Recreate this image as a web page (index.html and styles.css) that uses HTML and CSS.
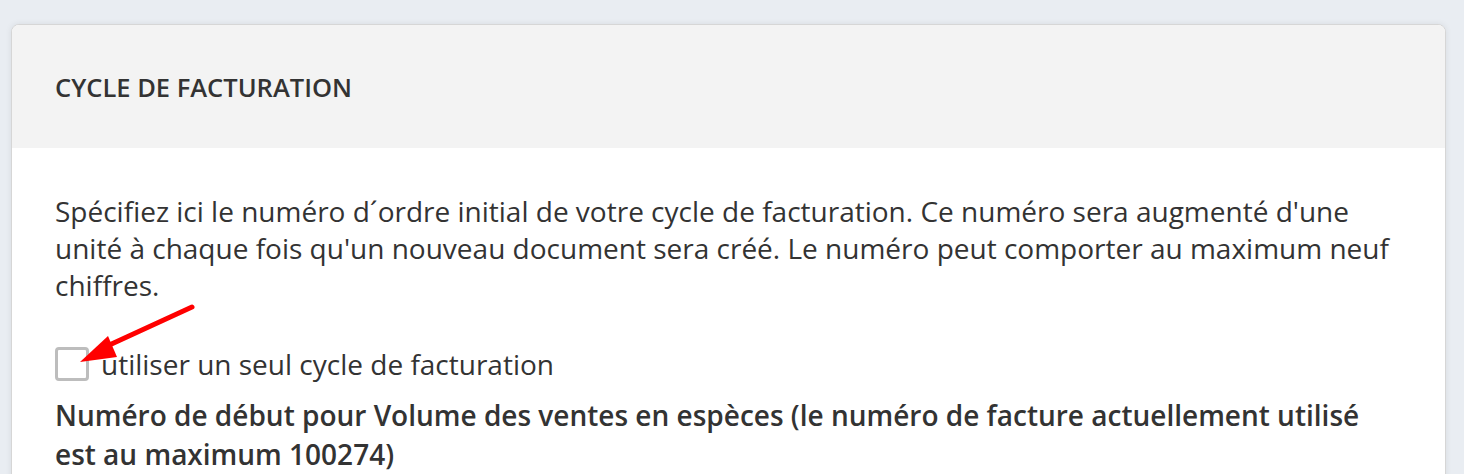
FILE: index.html
```html
<!DOCTYPE html>
<html lang="fr">
<head>
  <meta charset="UTF-8" />
  <title>Cycle de facturation</title>
  <link rel="stylesheet" href="styles.css">
</head>
<body>
  <div class="card">
    <div class="card-header">
      <h2>Cycle de facturation</h2>
    </div>
    <div class="card-body">
      <p class="intro">Spécifiez ici le numéro d´ordre initial de votre cycle de facturation. Ce numéro sera augmenté d'une unité à chaque fois qu'un nouveau document sera créé. Le numéro peut comporter au maximum neuf chiffres.</p>

      <label class="check">
        <input type="checkbox" id="singleCycle" />
        <span class="box"></span>
        utiliser un seul cycle de facturation
        <!-- fleche d'annotation -->
        <svg class="arrow" width="160" height="80" viewBox="0 0 160 80">
          <line x1="142" y1="7" x2="55" y2="47" stroke="#f00" stroke-width="5" stroke-linecap="round" />
          <polygon points="30,62 58,36 67,57" fill="#f00" />
        </svg>
      </label>

      <p class="field-label">Numéro de début pour Volume des ventes en espèces (le numéro de facture actuellement utilisé est au maximum 100274)</p>
    </div>
  </div>
</body>
</html>
```

FILE: styles.css
```css
body {
  font-family: "Open Sans", Arial, sans-serif;
  background: #e9edf2;
  color: #333;
  margin: 0;
  padding: 24px 18px 0 11px;
}
.card {
  background: #fff;
  border: 1px solid #d6d6d6;
  border-radius: 8px;
  box-shadow: 0 0 6px rgba(0,0,0,0.08);
  overflow: hidden;
}
.card-header {
  background: #f3f3f3;
  height: 123px;
  display: flex;
  align-items: center;
  padding: 0 43px;
}
.card-header h2 {
  margin: 0;
  font-size: 25.5px;
  font-weight: 600;
  text-transform: uppercase;
  color: #333;
}
.card-body {
  padding: 45px 43px 40px 43px;
}
.intro {
  margin: 0;
  font-size: 28px;
  line-height: 37px;
}
.check {
  position: relative;
  display: flex;
  align-items: center;
  gap: 12px;
  margin-top: 41px;
  font-size: 28px;
}
.check input {
  display: none;
}
.check .box {
  width: 28px;
  height: 28px;
  border: 3px solid #bdbdbd;
  border-radius: 4px;
  background: #fff;
}
.field-label {
  margin: 13px 0 0 0;
  font-size: 28px;
  font-weight: 600;
  line-height: 39px;
}
.arrow {
  position: absolute;
  left: -5px;
  top: -45px;
}
```
